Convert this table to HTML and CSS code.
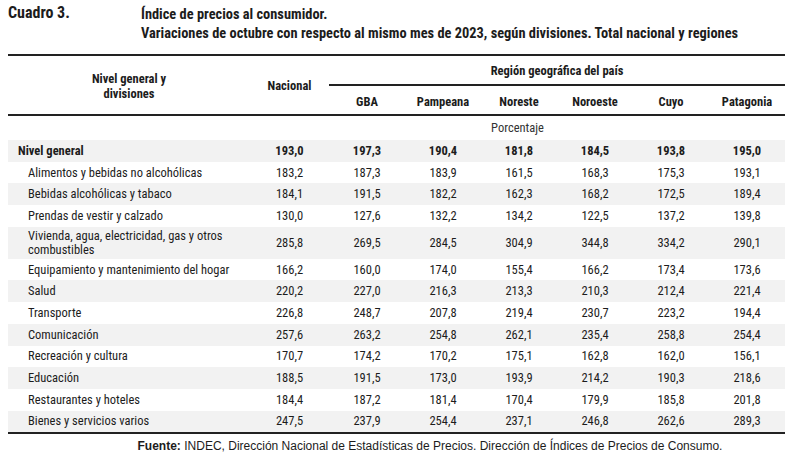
FILE: index.html
```html
<!DOCTYPE html>
<html lang="es">
<head>
<meta charset="utf-8">
<title>Cuadro 3</title>
<link rel="stylesheet" href="styles.css">
</head>
<body>
<div class="page">
  <div class="heading">
    <div class="label">Cuadro 3.</div>
    <div class="title">
      <div>Índice de precios al consumidor.</div>
      <div>Variaciones de octubre con respecto al mismo mes de 2023, según divisiones. Total nacional y regiones</div>
    </div>
  </div>
  <table class="data">
    <colgroup>
      <col class="c-label"><col class="c-nac"><col class="c-reg"><col class="c-reg"><col class="c-reg"><col class="c-reg"><col class="c-reg"><col class="c-reg">
    </colgroup>
    <thead>
      <tr class="h1">
        <th rowspan="2" class="hlabel">Nivel general y<br>divisiones</th>
        <th rowspan="2" class="hnac">Nacional</th>
        <th colspan="6" class="hreg">Región geográfica del país</th>
      </tr>
      <tr class="h2">
        <th>GBA</th><th>Pampeana</th><th>Noreste</th><th>Noroeste</th><th>Cuyo</th><th>Patagonia</th>
      </tr>
    </thead>
    <tbody>
      <tr class="unit"><td></td><td colspan="7">Porcentaje</td></tr>
      <tr class="total shade"><td class="lbl">Nivel general</td><td>193,0</td><td>197,3</td><td>190,4</td><td>181,8</td><td>184,5</td><td>193,8</td><td>195,0</td></tr>
      <tr><td class="lbl sub">Alimentos y bebidas no alcohólicas</td><td>183,2</td><td>187,3</td><td>183,9</td><td>161,5</td><td>168,3</td><td>175,3</td><td>193,1</td></tr>
      <tr class="shade"><td class="lbl sub">Bebidas alcohólicas y tabaco</td><td>184,1</td><td>191,5</td><td>182,2</td><td>162,3</td><td>168,2</td><td>172,5</td><td>189,4</td></tr>
      <tr><td class="lbl sub">Prendas de vestir y calzado</td><td>130,0</td><td>127,6</td><td>132,2</td><td>134,2</td><td>122,5</td><td>137,2</td><td>139,8</td></tr>
      <tr class="shade tall"><td class="lbl sub">Vivienda, agua, electricidad, gas y otros<br>combustibles</td><td>285,8</td><td>269,5</td><td>284,5</td><td>304,9</td><td>344,8</td><td>334,2</td><td>290,1</td></tr>
      <tr><td class="lbl sub">Equipamiento y mantenimiento del hogar</td><td>166,2</td><td>160,0</td><td>174,0</td><td>155,4</td><td>166,2</td><td>173,4</td><td>173,6</td></tr>
      <tr class="shade"><td class="lbl sub">Salud</td><td>220,2</td><td>227,0</td><td>216,3</td><td>213,3</td><td>210,3</td><td>212,4</td><td>221,4</td></tr>
      <tr><td class="lbl sub">Transporte</td><td>226,8</td><td>248,7</td><td>207,8</td><td>219,4</td><td>230,7</td><td>223,2</td><td>194,4</td></tr>
      <tr class="shade"><td class="lbl sub">Comunicación</td><td>257,6</td><td>263,2</td><td>254,8</td><td>262,1</td><td>235,4</td><td>258,8</td><td>254,4</td></tr>
      <tr><td class="lbl sub">Recreación y cultura</td><td>170,7</td><td>174,2</td><td>170,2</td><td>175,1</td><td>162,8</td><td>162,0</td><td>156,1</td></tr>
      <tr class="shade"><td class="lbl sub">Educación</td><td>188,5</td><td>191,5</td><td>173,0</td><td>193,9</td><td>214,2</td><td>190,3</td><td>218,6</td></tr>
      <tr><td class="lbl sub">Restaurantes y hoteles</td><td>184,4</td><td>187,2</td><td>181,4</td><td>170,4</td><td>179,9</td><td>185,8</td><td>201,8</td></tr>
      <tr class="shade last"><td class="lbl sub">Bienes y servicios varios</td><td>247,5</td><td>237,9</td><td>254,4</td><td>237,1</td><td>246,8</td><td>262,6</td><td>289,3</td></tr>
    </tbody>
  </table>
  <p class="source"><b>Fuente:</b> INDEC, Dirección Nacional de Estadísticas de Precios. Dirección de Índices de Precios de Consumo.</p>
</div>
</body>
</html>
```

FILE: styles.css
```css
html, body {
  margin: 0;
  padding: 0;
  background: #ffffff;
}
.page {
  padding: 5px 5px 0 8px;
  font-family: "Liberation Sans Narrow", "Roboto Condensed", "DejaVu Sans Condensed", "Arial Narrow", "Liberation Sans", sans-serif;
  font-stretch: condensed;
  color: #1c1c1c;
}
.heading {
  display: flex;
  font-weight: bold;
  font-size: 14.4px;
  line-height: 19px;
  height: 49px;
}
.label {
  width: 133px;
  font-size: 16px;
  line-height: 16px;
}
.title {
  flex: 1;
}
.data {
  width: 777px;
  border-collapse: collapse;
  table-layout: fixed;
  font-size: 12.5px;
}
.c-label { width: 242px; }
.c-nac { width: 79px; }
.c-reg { width: 76px; }
.data th {
  font-weight: bold;
  text-align: center;
  padding: 0;
  line-height: 15px;
}
.h1 th { border-top: 2px solid #222; }
.h1 { height: 30px; }
.h2 { height: 30px; }
.hreg { border-bottom: 2px solid #222; }
.h2 th, .hlabel, .hnac { border-bottom: 2px solid #222; }
.h2 th { padding-top: 3px; }
.hlabel { padding-top: 2px !important; }
.data td {
  padding: 0;
  text-align: center;
  height: 21.7px;
  line-height: 14px;
}
.unit td {
  height: 24px;
  color: #333;
}
.shade td { background: #f2f2f2; }
.total td { font-weight: bold; }
.lbl { text-align: left !important; padding-left: 10px !important; }
.lbl.sub { padding-left: 20px !important; }
.tall td { height: 32px; }
.last td { border-bottom: 2px solid #222; }
.source {
  margin: 5px 0 0 0;
  font-family: "Liberation Sans", Arial, sans-serif;
  font-stretch: normal;
  font-size: 12px;
  text-align: center;
  padding-left: 67px;
}
```
